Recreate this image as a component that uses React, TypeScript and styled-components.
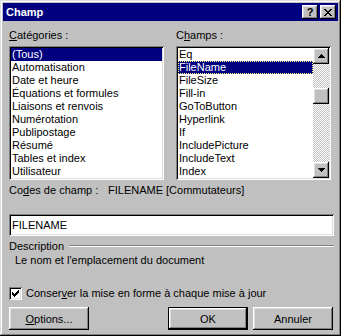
import React from "react";
import styled, { createGlobalStyle } from "styled-components";

const Global = createGlobalStyle`
  html, body { margin: 0; padding: 0; background: #c0c0c0; }
  body { font-family: "Liberation Sans", Arial, sans-serif; font-size: 11px; color: #000; }
  * { box-sizing: border-box; }
`;

const raised = `
  box-shadow: inset -1px -1px #000, inset 1px 1px #fff, inset -2px -2px #808080, inset 2px 2px #dfdfdf;
`;
const sunken = `
  box-shadow: inset 1px 1px #808080, inset -1px -1px #fff, inset 2px 2px #000, inset -2px -2px #dfdfdf;
`;

const Window = styled.div`
  width: 341px;
  height: 336px;
  background: #c0c0c0;
  padding: 3px;
  display: flex;
  flex-direction: column;
  box-shadow: inset -1px -1px #000, inset 1px 1px #dfdfdf, inset -2px -2px #808080, inset 2px 2px #fff;
`;

const TitleBar = styled.div`
  height: 18px;
  background: #000080;
  display: flex;
  align-items: center;
  padding: 0 2px 0 3px;
`;

const Title = styled.div`
  flex: 1;
  color: #fff;
  font-weight: bold;
  font-size: 11px;
  line-height: 18px;
`;

const CapButton = styled.div<{ $gap?: number }>`
  width: 16px;
  height: 14px;
  background: #c0c0c0;
  margin-left: ${(p) => p.$gap ?? 0}px;
  display: flex;
  align-items: center;
  justify-content: center;
  font-weight: bold;
  font-size: 11px;
  line-height: 14px;
  ${raised}
`;

const Body = styled.div`
  flex: 1;
  display: flex;
  flex-direction: column;
  padding: 6px 4px 0 6px;
`;

const Columns = styled.div`
  display: grid;
  grid-template-columns: 155px 155px;
  column-gap: 12px;
`;

const Column = styled.div`
  display: flex;
  flex-direction: column;
  gap: 3px;
`;

const Label = styled.div<{ $lh?: number }>`
  line-height: ${(p) => p.$lh ?? 16}px;
  height: ${(p) => p.$lh ?? 16}px;
  white-space: nowrap;
`;

const ListBox = styled.div`
  height: 134px;
  background: #fff;
  padding: 2px;
  display: flex;
  ${sunken}
`;

const Rows = styled.div`
  flex: 1;
  display: flex;
  flex-direction: column;
  min-width: 0;
`;

const Row = styled.div<{ $sel?: boolean; $focus?: boolean }>`
  height: 13px;
  line-height: 13px;
  padding-left: 1px;
  white-space: nowrap;
  background: ${(p) => (p.$sel ? "#000080" : "transparent")};
  color: ${(p) => (p.$sel ? "#fff" : "#000")};
  outline: ${(p) => (p.$focus ? "1px dotted #ffff80" : "none")};
  outline-offset: -1px;
`;

const ScrollBar = styled.div`
  width: 16px;
  display: flex;
  flex-direction: column;
  background-color: #c0c0c0;
  background-image: conic-gradient(#fff 25%, #c0c0c0 0 50%, #fff 0 75%, #c0c0c0 0);
  background-size: 2px 2px;
`;

const ScrollBtn = styled.div`
  width: 16px;
  height: 16px;
  background: #c0c0c0;
  display: flex;
  align-items: center;
  justify-content: center;
  ${raised}
`;

const Thumb = styled.div`
  width: 16px;
  height: 16px;
  margin-top: 24px;
  background: #c0c0c0;
  ${raised}
`;

const Spacer = styled.div`
  flex: 1;
`;

const CodesRow = styled.div`
  display: flex;
  margin-top: 2px;
  line-height: 16px;
  height: 16px;
  white-space: nowrap;
`;

const CodesLabel = styled.div`
  width: 99px;
`;

const Input = styled.div`
  margin-top: 16px;
  height: 22px;
  background: #fff;
  padding: 2px 3px;
  line-height: 18px;
  ${sunken}
`;

const GroupRow = styled.div`
  margin-top: 3px;
  display: flex;
  align-items: center;
  height: 14px;
  line-height: 14px;
`;

const Etch = styled.div`
  flex: 1;
  height: 2px;
  margin-left: 5px;
  border-top: 1px solid #808080;
  border-bottom: 1px solid #fff;
`;

const DescText = styled.div`
  height: 14px;
  line-height: 14px;
  padding-left: 6px;
`;

const CheckRow = styled.div`
  margin-top: 20px;
  display: flex;
  align-items: center;
  gap: 4px;
  height: 13px;
  line-height: 13px;
`;

const CheckBox = styled.div`
  width: 13px;
  height: 13px;
  background: #fff;
  display: flex;
  align-items: center;
  justify-content: center;
  ${sunken}
`;

const ButtonRow = styled.div`
  margin-top: 7px;
  display: flex;
  padding-right: 1px;
`;

const Button = styled.div<{ $default?: boolean; $ml?: number }>`
  width: 80px;
  height: 23px;
  margin-left: ${(p) => p.$ml ?? 0}px;
  display: flex;
  align-items: center;
  justify-content: center;
  background: #c0c0c0;
  ${(p) =>
    p.$default
      ? `box-shadow: inset 0 0 0 1px #000, inset -2px -2px #000, inset 2px 2px #fff, inset -3px -3px #808080, inset 3px 3px #dfdfdf;`
      : raised}
`;

const U = styled.span`
  text-decoration: underline;
  text-underline-offset: 1px;
`;

const Arrow = ({ up }: { up?: boolean }) => (
  <svg width="7" height="4" viewBox="0 0 7 4" shapeRendering="crispEdges">
    {up ? (
      <>
        <rect x="3" y="0" width="1" height="1" fill="#000" />
        <rect x="2" y="1" width="3" height="1" fill="#000" />
        <rect x="1" y="2" width="5" height="1" fill="#000" />
        <rect x="0" y="3" width="7" height="1" fill="#000" />
      </>
    ) : (
      <>
        <rect x="0" y="0" width="7" height="1" fill="#000" />
        <rect x="1" y="1" width="5" height="1" fill="#000" />
        <rect x="2" y="2" width="3" height="1" fill="#000" />
        <rect x="3" y="3" width="1" height="1" fill="#000" />
      </>
    )}
  </svg>
);

const CloseGlyph = () => (
  <svg width="8" height="7" viewBox="0 0 8 7" shapeRendering="crispEdges">
    {[0, 1, 2, 3, 4, 5, 6].map((i) => (
      <React.Fragment key={i}>
        <rect x={i} y={i} width="2" height="1" fill="#000" />
        <rect x={6 - i} y={i} width="2" height="1" fill="#000" />
      </React.Fragment>
    ))}
  </svg>
);

const CheckGlyph = () => (
  <svg width="7" height="7" viewBox="0 0 7 7" shapeRendering="crispEdges">
    <rect x="0" y="2" width="1" height="3" fill="#000" />
    <rect x="1" y="3" width="1" height="3" fill="#000" />
    <rect x="2" y="4" width="1" height="3" fill="#000" />
    <rect x="3" y="3" width="1" height="3" fill="#000" />
    <rect x="4" y="2" width="1" height="3" fill="#000" />
    <rect x="5" y="1" width="1" height="3" fill="#000" />
    <rect x="6" y="0" width="1" height="3" fill="#000" />
  </svg>
);

const categories = [
  "(Tous)",
  "Automatisation",
  "Date et heure",
  "Équations et formules",
  "Liaisons et renvois",
  "Numérotation",
  "Publipostage",
  "Résumé",
  "Tables et index",
  "Utilisateur",
];

const fields = [
  "Eq",
  "FileName",
  "FileSize",
  "Fill-in",
  "GoToButton",
  "Hyperlink",
  "If",
  "IncludePicture",
  "IncludeText",
  "Index",
];

export default function App() {
  return (
    <>
      <Global />
      <Window>
        <TitleBar>
          <Title>Champ</Title>
          <CapButton>?</CapButton>
          <CapButton $gap={2}>
            <CloseGlyph />
          </CapButton>
        </TitleBar>
        <Body>
          <Columns>
            <Column>
              <Label>
                <U>C</U>atégories :
              </Label>
              <ListBox>
                <Rows>
                  {categories.map((c, i) => (
                    <Row key={c} $sel={i === 0}>
                      {c}
                    </Row>
                  ))}
                </Rows>
              </ListBox>
            </Column>
            <Column>
              <Label>
                C<U>h</U>amps :
              </Label>
              <ListBox>
                <Rows>
                  {fields.map((f, i) => (
                    <Row key={f} $sel={i === 1} $focus={i === 1}>
                      {f}
                    </Row>
                  ))}
                </Rows>
                <ScrollBar>
                  <ScrollBtn>
                    <Arrow up />
                  </ScrollBtn>
                  <Thumb />
                  <Spacer />
                  <ScrollBtn>
                    <Arrow />
                  </ScrollBtn>
                </ScrollBar>
              </ListBox>
            </Column>
          </Columns>
          <CodesRow>
            <CodesLabel>
              Co<U>d</U>es de champ :
            </CodesLabel>
            <div>FILENAME [Commutateurs]</div>
          </CodesRow>
          <Input>FILENAME</Input>
          <GroupRow>
            <span>Description</span>
            <Etch />
          </GroupRow>
          <DescText>Le nom et l'emplacement du document</DescText>
          <CheckRow>
            <CheckBox>
              <CheckGlyph />
            </CheckBox>
            <span>
              Conser<U>v</U>er la mise en forme à chaque mise à jour
            </span>
          </CheckRow>
          <ButtonRow>
            <Button>
              <span>
                <U>O</U>ptions...
              </span>
            </Button>
            <Spacer />
            <Button $default>OK</Button>
            <Button $ml={5}>Annuler</Button>
          </ButtonRow>
        </Body>
      </Window>
    </>
  );
}
